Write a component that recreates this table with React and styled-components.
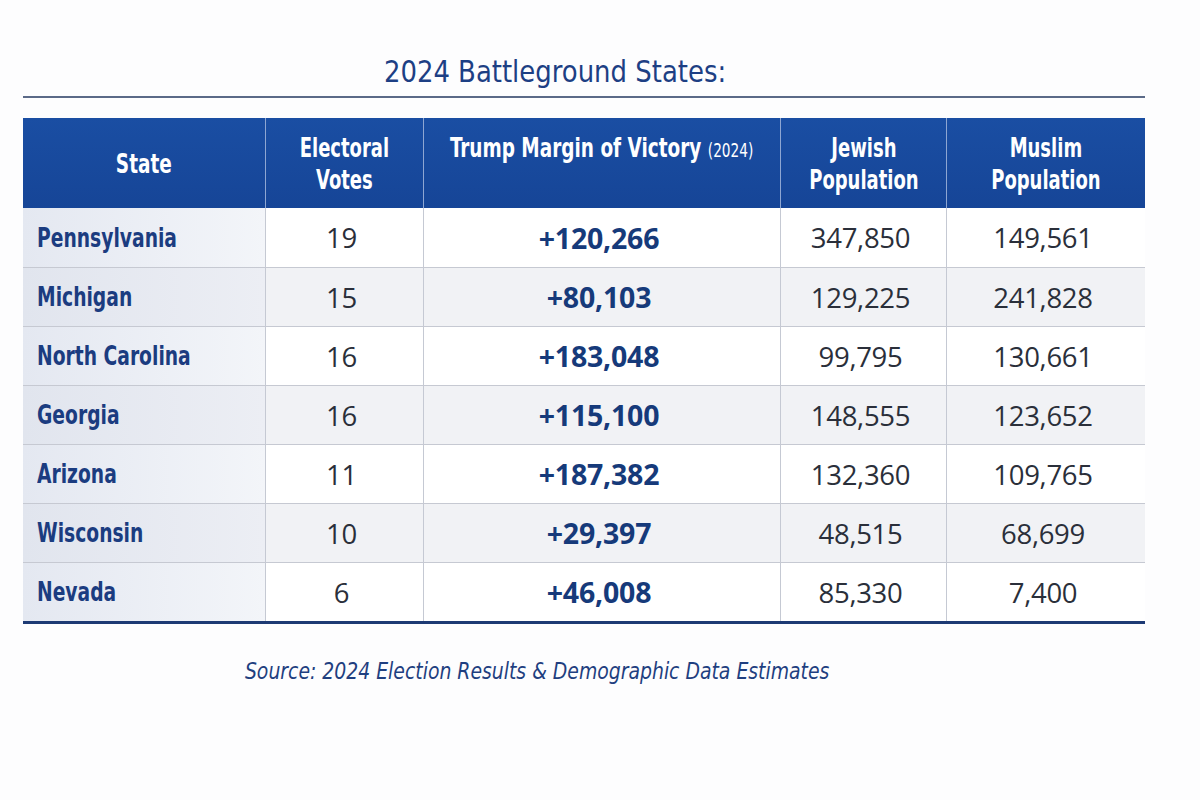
import styled, { createGlobalStyle } from 'styled-components';

const GlobalStyle = createGlobalStyle`
  body {
    margin: 0;
    background: #fdfdfe;
    font-family: "Open Sans", "DejaVu Sans", sans-serif;
  }
`;

const CONDENSED = '"DejaVu Sans Condensed", "DejaVu Sans", sans-serif';
const COLS = '242px 158px 357px 166px 199px';

const rows = [
  { state: 'Pennsylvania', votes: 19, margin: '+120,266', jewish: '347,850', muslim: '149,561' },
  { state: 'Michigan', votes: 15, margin: '+80,103', jewish: '129,225', muslim: '241,828' },
  { state: 'North Carolina', votes: 16, margin: '+183,048', jewish: '99,795', muslim: '130,661' },
  { state: 'Georgia', votes: 16, margin: '+115,100', jewish: '148,555', muslim: '123,652' },
  { state: 'Arizona', votes: 11, margin: '+187,382', jewish: '132,360', muslim: '109,765' },
  { state: 'Wisconsin', votes: 10, margin: '+29,397', jewish: '48,515', muslim: '68,699' },
  { state: 'Nevada', votes: 6, margin: '+46,008', jewish: '85,330', muslim: '7,400' },
];

const Page = styled.div`
  width: 1200px;
  height: 800px;
  padding: 51px 0 0 23px;
  box-sizing: border-box;
`;

const Wrap = styled.div`
  width: 1122px;
  display: flex;
  flex-direction: column;
`;

// the reference type is a tall, narrow face; squeeze DejaVu Condensed to match
const Squeeze = styled.span`
  display: inline-block;
  white-space: nowrap;
  transform: scaleX(${(p) => p.$k});
  transform-origin: ${(p) => (p.$left ? 'left center' : 'center center')};
`;

const Title = styled.h1`
  margin: 0;
  padding-right: 58px;
  text-align: center;
  font-family: ${CONDENSED};
  font-weight: normal;
  font-size: 31px;
  line-height: 40px;
  color: #1d3f84;
`;

const Rule = styled.div`
  height: 2px;
  margin-top: 5px;
  background: #5b6a88;
`;

const Table = styled.div`
  margin-top: 20px;
  display: grid;
  grid-template-columns: ${COLS};
  border-bottom: 3px solid #1d3a74;
`;

const Head = styled.div`
  height: 90px;
  box-sizing: border-box;
  background: linear-gradient(180deg, #1a4ea3 0%, #164597 100%);
  color: #fff;
  font-family: ${CONDENSED};
  font-weight: bold;
  font-size: 27px;
  line-height: 32px;
  text-align: center;
  display: flex;
  align-items: ${(p) => (p.$top ? 'flex-start' : 'center')};
  justify-content: center;
  padding-top: ${(p) => (p.$top ? '14px' : '2px')};
  border-left: ${(p) => (p.$first ? 'none' : '1px solid #8ea6d2')};
`;

const Small = styled.span`
  font-weight: normal;
  font-size: 20px;
`;

const Cell = styled.div`
  height: 59px;
  box-sizing: border-box;
  display: flex;
  align-items: center;
  justify-content: ${(p) => (p.$left ? 'flex-start' : 'center')};
  padding-left: ${(p) => (p.$left ? '14px' : '0')};
  padding-right: ${(p) => (p.$left ? '0' : '6px')};
  background: ${(p) => (p.$alt ? '#f1f2f5' : '#ffffff')};
  border-left: ${(p) => (p.$first ? 'none' : '1px solid #c5c9d3')};
  border-top: ${(p) => (p.$firstRow ? 'none' : '1.5px solid #c6c9d2')};
  color: #2a2f3a;
  font-size: 27.5px;
  letter-spacing: -0.3px;
`;

const StateCell = styled(Cell)`
  background: ${(p) =>
    p.$alt
      ? 'linear-gradient(90deg, #e1e5ee 0%, #eceef4 100%)'
      : 'linear-gradient(90deg, #e4e8f1 0%, #f3f5f9 100%)'};
  font-family: ${CONDENSED};
  font-weight: bold;
  font-size: 26px;
  letter-spacing: 0;
  color: #1b3c80;
`;

const MarginCell = styled(Cell)`
  font-weight: bold;
  font-size: 28.5px;
  letter-spacing: -0.2px;
  color: #163a7a;
`;

const Source = styled.p`
  margin: 34px 0 0;
  padding-right: 93px;
  text-align: center;
  font-family: ${CONDENSED};
  font-style: italic;
  font-size: 23px;
  color: #1f3f80;
`;

export default function App() {
  return (
    <Page>
      <GlobalStyle />
      <Wrap>
        <Title>
          <Squeeze $k={0.93}>2024 Battleground States:</Squeeze>
        </Title>
        <Rule />
        <Table>
          <Head $first><Squeeze $k={0.76}>State</Squeeze></Head>
          <Head><Squeeze $k={0.74}>Electoral<br />Votes</Squeeze></Head>
          <Head $top>
            <Squeeze $k={0.76}>Trump Margin of Victory <Small>(2024)</Small></Squeeze>
          </Head>
          <Head><Squeeze $k={0.74}>Jewish<br />Population</Squeeze></Head>
          <Head><Squeeze $k={0.74}>Muslim<br />Population</Squeeze></Head>
          {rows.map((r, i) => {
            const alt = i % 2 === 1;
            const firstRow = i === 0;
            return [
              <StateCell key={r.state + 's'} $left $first $alt={alt} $firstRow={firstRow}>
                <Squeeze $k={0.8} $left>{r.state}</Squeeze>
              </StateCell>,
              <Cell key={r.state + 'v'} $alt={alt} $firstRow={firstRow}>{r.votes}</Cell>,
              <MarginCell key={r.state + 'm'} $alt={alt} $firstRow={firstRow}>{r.margin}</MarginCell>,
              <Cell key={r.state + 'j'} $alt={alt} $firstRow={firstRow}>{r.jewish}</Cell>,
              <Cell key={r.state + 'u'} $alt={alt} $firstRow={firstRow}>{r.muslim}</Cell>,
            ];
          })}
        </Table>
        <Source>
          <Squeeze $k={0.91}>Source: 2024 Election Results &amp; Demographic Data Estimates</Squeeze>
        </Source>
      </Wrap>
    </Page>
  );
}
